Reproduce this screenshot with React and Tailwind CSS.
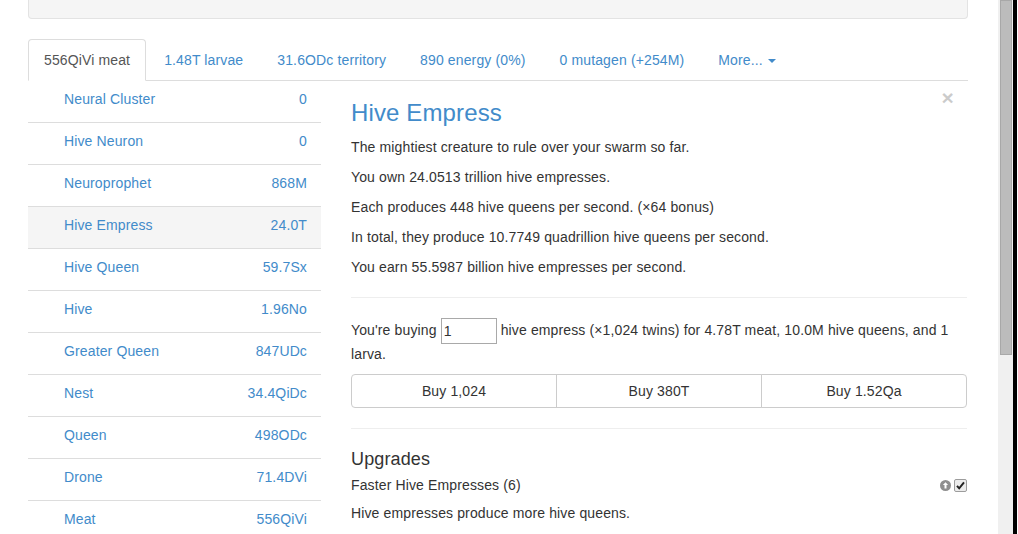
import React from 'react';

const tabs = [
  { label: '556QiVi meat', active: true },
  { label: '1.48T larvae' },
  { label: '31.6ODc territory' },
  { label: '890 energy (0%)' },
  { label: '0 mutagen (+254M)' },
];

const units = [
  ['Neural Cluster', '0'],
  ['Hive Neuron', '0'],
  ['Neuroprophet', '868M'],
  ['Hive Empress', '24.0T', true],
  ['Hive Queen', '59.7Sx'],
  ['Hive', '1.96No'],
  ['Greater Queen', '847UDc'],
  ['Nest', '34.4QiDc'],
  ['Queen', '498ODc'],
  ['Drone', '71.4DVi'],
  ['Meat', '556QiVi'],
];

const facts = [
  'The mightiest creature to rule over your swarm so far.',
  'You own 24.0513 trillion hive empresses.',
  'Each produces 448 hive queens per second. (×64 bonus)',
  'In total, they produce 10.7749 quadrillion hive queens per second.',
  'You earn 55.5987 billion hive empresses per second.',
];

function UpgradeIcons() {
  return (
    <div className="flex items-center gap-[3px]">
      <svg width="11" height="11" viewBox="0 0 11 11">
        <circle cx="5.5" cy="5.5" r="5.5" fill="#8f8f8f" />
        <path d="M5.5 2.3 L8.1 5.1 H6.5 V8.5 H4.5 V5.1 H2.9 Z" fill="#fff" />
      </svg>
      <svg width="13" height="13" viewBox="0 0 13 13">
        <rect x="0.5" y="0.5" width="12" height="12" rx="1.5" fill="#ececec" stroke="#9c9c9c" />
        <path d="M3 6.8 L5.2 9.3 L10 3.4" fill="none" stroke="#222" strokeWidth="2" />
      </svg>
    </div>
  );
}

export default function App() {
  return (
    <div
      className="flex h-[534px] w-[1018px] overflow-hidden bg-white text-[14px] leading-[20px] tracking-[0.13px] text-[#333]"
      style={{ fontFamily: '"Liberation Sans", Arial, sans-serif' }}
    >
      <div className="w-[998px] shrink-0">
        <div className="ml-[28px] w-[940px]">
          {/* well */}
          <div className="h-[19px] rounded-b-[4px] border-x border-b border-[#e3e3e3] bg-[#f5f5f5]" />

          {/* tabs */}
          <ul className="mt-[20px] flex border-b border-[#ddd]">
            {tabs.map((t) => (
              <li key={t.label} className="mr-[2px] -mb-px">
                {t.active ? (
                  <span className="block rounded-t-[4px] border border-[#ddd] border-b-transparent bg-white px-[15px] py-[10px] text-[#555]">
                    {t.label}
                  </span>
                ) : (
                  <span className="block border border-transparent px-[15px] py-[10px] text-[#428bca]">
                    {t.label}
                  </span>
                )}
              </li>
            ))}
            <li className="-mb-px">
              <span className="flex items-center border border-transparent px-[15px] py-[10px] text-[#428bca]">
                More...
                <svg className="ml-[5px] mt-[2px]" width="8" height="4" viewBox="0 0 8 4">
                  <path d="M0 0 H8 L4 4 Z" fill="#428bca" />
                </svg>
              </span>
            </li>
          </ul>

          <div className="flex gap-[30px]">
            {/* unit list */}
            <div className="w-[293px] shrink-0">
              {units.map(([name, val, sel]) => (
                <div
                  key={name}
                  className={`flex h-[42px] items-start justify-between border-b border-[#ddd] pl-[36px] pr-[14px] pt-[8px] text-[#428bca] ${sel ? 'bg-[#f5f5f5]' : ''}`}
                >
                  <span>{name}</span>
                  <span>{val}</span>
                </div>
              ))}
            </div>

            {/* detail */}
            <div className="w-[616px]">
              <button
                type="button"
                className="float-right mr-[13px] mt-[6px] text-[21px] font-bold leading-none text-black opacity-20"
              >
                ×
              </button>
              <h3 className="mt-[19px] mb-[11px] text-[24px] leading-[1.1] text-[#428bca]">Hive Empress</h3>
              {facts.map((f) => (
                <p key={f} className="mb-[10px]">
                  {f}
                </p>
              ))}
              <hr className="mt-[20px] mb-[20px] border-t border-[#eee]" />
              <p className="mb-[10px]">
                You're buying{' '}
                <input
                  defaultValue="1"
                  className="h-[26px] w-[56px] border border-[#a9a9a9] px-[2px] align-middle text-[14px] text-[#333] outline-none"
                  style={{ fontFamily: '"Liberation Sans", Arial, sans-serif' }}
                />{' '}
                hive empress (×1,024 twins) for 4.78T meat, 10.0M hive queens, and 1 larva.
              </p>
              <div className="flex">
                {['Buy 1,024', 'Buy 380T', 'Buy 1.52Qa'].map((b, i) => (
                  <button
                    key={b}
                    type="button"
                    className={`h-[34px] flex-1 border border-[#ccc] bg-white text-[14px] tracking-[0.13px] text-[#333] ${i === 0 ? 'rounded-l-[4px]' : '-ml-px'} ${i === 2 ? 'rounded-r-[4px]' : ''}`}
                  >
                    {b}
                  </button>
                ))}
              </div>
              <hr className="mt-[20px] mb-[20px] border-t border-[#eee]" />
              <h4 className="mb-[6px] text-[18px] leading-[20px] text-[#333]">Upgrades</h4>
              <div className="flex items-center justify-between">
                <span>Faster Hive Empresses (6)</span>
                <UpgradeIcons />
              </div>
              <p className="mt-[8px]">Hive empresses produce more hive queens.</p>
            </div>
          </div>
        </div>
      </div>

      {/* scrollbar */}
      <div className="flex w-[20px] shrink-0">
        <div className="w-[15px] bg-[#f0f0f0] px-[2px]">
          <div className="h-[355px] w-[12px] border border-[#a8a8a8] bg-[#bcbcbc]" />
        </div>
        <div className="w-[4px] bg-black" />
        <div className="w-[1px] bg-white" />
      </div>
    </div>
  );
}
